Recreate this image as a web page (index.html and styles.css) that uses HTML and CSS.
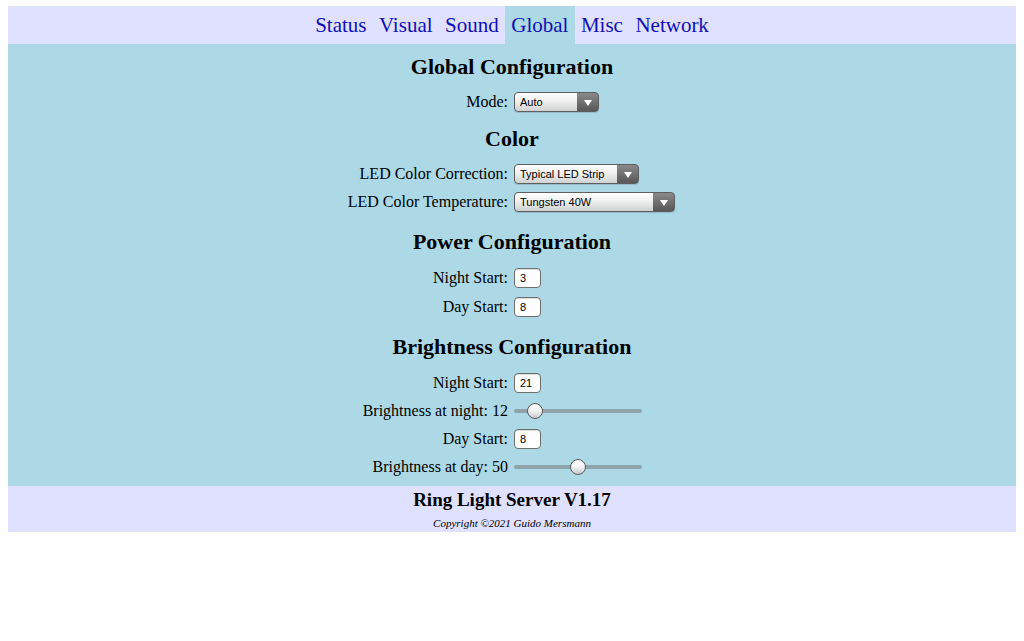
FILE: index.html
```html
<!DOCTYPE html>
<html lang="en">
<head>
<meta charset="utf-8">
<title>Ring Light Server</title>
<link rel="stylesheet" href="styles.css">
</head>
<body>
<nav class="tabs">
  <a class="tab" href="#status">Status</a>
  <a class="tab" href="#visual">Visual</a>
  <a class="tab" href="#sound">Sound</a>
  <a class="tab active" href="#global">Global</a>
  <a class="tab" href="#misc">Misc</a>
  <a class="tab" href="#network">Network</a>
</nav>

<main class="panel">
  <section class="group group-global">
    <h2 class="group-title">Global Configuration</h2>
    <div class="row row-select">
      <label class="label" for="mode">Mode:</label>
      <span class="select w-mode">
        <select id="mode"><option>Auto</option><option>Manual</option></select>
      </span>
    </div>
  </section>

  <section class="group group-color">
    <h2 class="group-title">Color</h2>
    <div class="row row-select">
      <label class="label" for="corr">LED Color Correction:</label>
      <span class="select w-corr">
        <select id="corr"><option>Typical LED Strip</option></select>
      </span>
    </div>
    <div class="row row-select">
      <label class="label" for="temp">LED Color Temperature:</label>
      <span class="select w-temp">
        <select id="temp"><option>Tungsten 40W</option></select>
      </span>
    </div>
  </section>

  <section class="group">
    <h2 class="group-title">Power Configuration</h2>
    <div class="row row-input">
      <label class="label" for="pnight">Night Start:</label>
      <input class="num" id="pnight" type="text" value="3">
    </div>
    <div class="row row-input">
      <label class="label" for="pday">Day Start:</label>
      <input class="num" id="pday" type="text" value="8">
    </div>
  </section>

  <section class="group">
    <h2 class="group-title">Brightness Configuration</h2>
    <div class="row row-input">
      <label class="label" for="bnight">Night Start:</label>
      <input class="num" id="bnight" type="text" value="21">
    </div>
    <div class="row row-slider">
      <label class="label" for="bnightlvl">Brightness at night: 12</label>
      <input class="slider" id="bnightlvl" type="range" min="0" max="100" value="12">
    </div>
    <div class="row row-input">
      <label class="label" for="bday">Day Start:</label>
      <input class="num" id="bday" type="text" value="8">
    </div>
    <div class="row row-slider">
      <label class="label" for="bdaylvl">Brightness at day: 50</label>
      <input class="slider" id="bdaylvl" type="range" min="0" max="100" value="50">
    </div>
  </section>
</main>

<footer class="footer">
  <div class="footer-title">Ring Light Server V1.17</div>
  <div class="copyright">Copyright &copy;2021 Guido Mersmann</div>
</footer>
</body>
</html>
```

FILE: styles.css
```css
body {
  margin: 6px 8px;
  font-family: "Liberation Serif", "Times New Roman", serif;
  color: #000;
  background: #fff;
}

/* top tab bar */
.tabs {
  display: flex;
  justify-content: center;
  height: 38px;
  background: #e0e0ff;
}

.tab {
  display: flex;
  align-items: center;
  padding: 0 6.25px;
  font-size: 21px;
  color: #1010b4;
  text-decoration: none;
}

.tab.active {
  background: #add8e6;
}

/* configuration panel */
.panel {
  background: #add8e6;
  padding: 10px 0 6px;
}

.group + .group {
  margin-top: 13px;
}

.group-global + .group-color {
  margin-top: 10px;
}

.group-title {
  margin: 0 0 8px;
  font-size: 22px;
  line-height: 26px;
  font-weight: bold;
  text-align: center;
}

.row {
  display: grid;
  grid-template-columns: 1fr 1fr;
  column-gap: 4px;
  align-items: center;
  font-size: 16px;
}

.row-select { height: 28px; }
.row-input { height: 29px; }
.row-slider { height: 27px; }

.label {
  text-align: right;
  padding-right: 2px;
}

/* drop-down selects */
.select {
  position: relative;
  justify-self: start;
  display: inline-flex;
}

.select select {
  appearance: none;
  -webkit-appearance: none;
  height: 20px;
  margin: 0;
  padding: 0 24px 0 5px;
  border: 1px solid #5e5e5e;
  border-radius: 4px;
  font: 11px "Liberation Sans", Arial, sans-serif;
  color: #000;
  background:
    linear-gradient(#8a8a8a, #575757) right / 21px 100% no-repeat,
    linear-gradient(#ffffff, #f0f0f0 45%, #cfd2d2);
  box-shadow: 0 1px 1px rgba(0, 0, 0, 0.15);
}

.select::after {
  content: "";
  position: absolute;
  right: 7px;
  top: 8px;
  border-left: 4px solid transparent;
  border-right: 4px solid transparent;
  border-top: 6px solid #fff;
  pointer-events: none;
}

.w-mode select { width: 85px; }
.w-corr select { width: 125px; }
.w-temp select { width: 161px; }

/* number fields */
.num {
  justify-self: start;
  box-sizing: border-box;
  width: 27px;
  height: 20px;
  margin: 0;
  padding: 0 0 0 5px;
  border: 1px solid #6e6e6e;
  border-radius: 4px;
  background: #fff;
  font: 11px "Liberation Sans", Arial, sans-serif;
  color: #000;
  box-shadow: inset 0 1px 1px rgba(0, 0, 0, 0.15);
}

/* range sliders */
.slider {
  justify-self: start;
  -webkit-appearance: none;
  appearance: none;
  width: 128px;
  height: 18px;
  margin: 0;
  background: transparent;
}

.slider::-webkit-slider-runnable-track {
  height: 4px;
  border-radius: 2px;
  background: #8ea3aa;
}

.slider::-webkit-slider-thumb {
  -webkit-appearance: none;
  box-sizing: border-box;
  width: 16px;
  height: 16px;
  margin-top: -6px;
  border: 1px solid #5a5a5a;
  border-radius: 50%;
  background: linear-gradient(#ffffff, #f2f2f2 50%, #c9c9c9);
}

/* footer */
.footer {
  background: #e0e0ff;
  padding: 2px 0 2px;
  text-align: center;
}

.footer-title {
  font-size: 19px;
  line-height: 24px;
  font-weight: bold;
}

.copyright {
  margin-top: 4px;
  font-size: 11px;
  line-height: 14px;
  font-style: italic;
}
```
